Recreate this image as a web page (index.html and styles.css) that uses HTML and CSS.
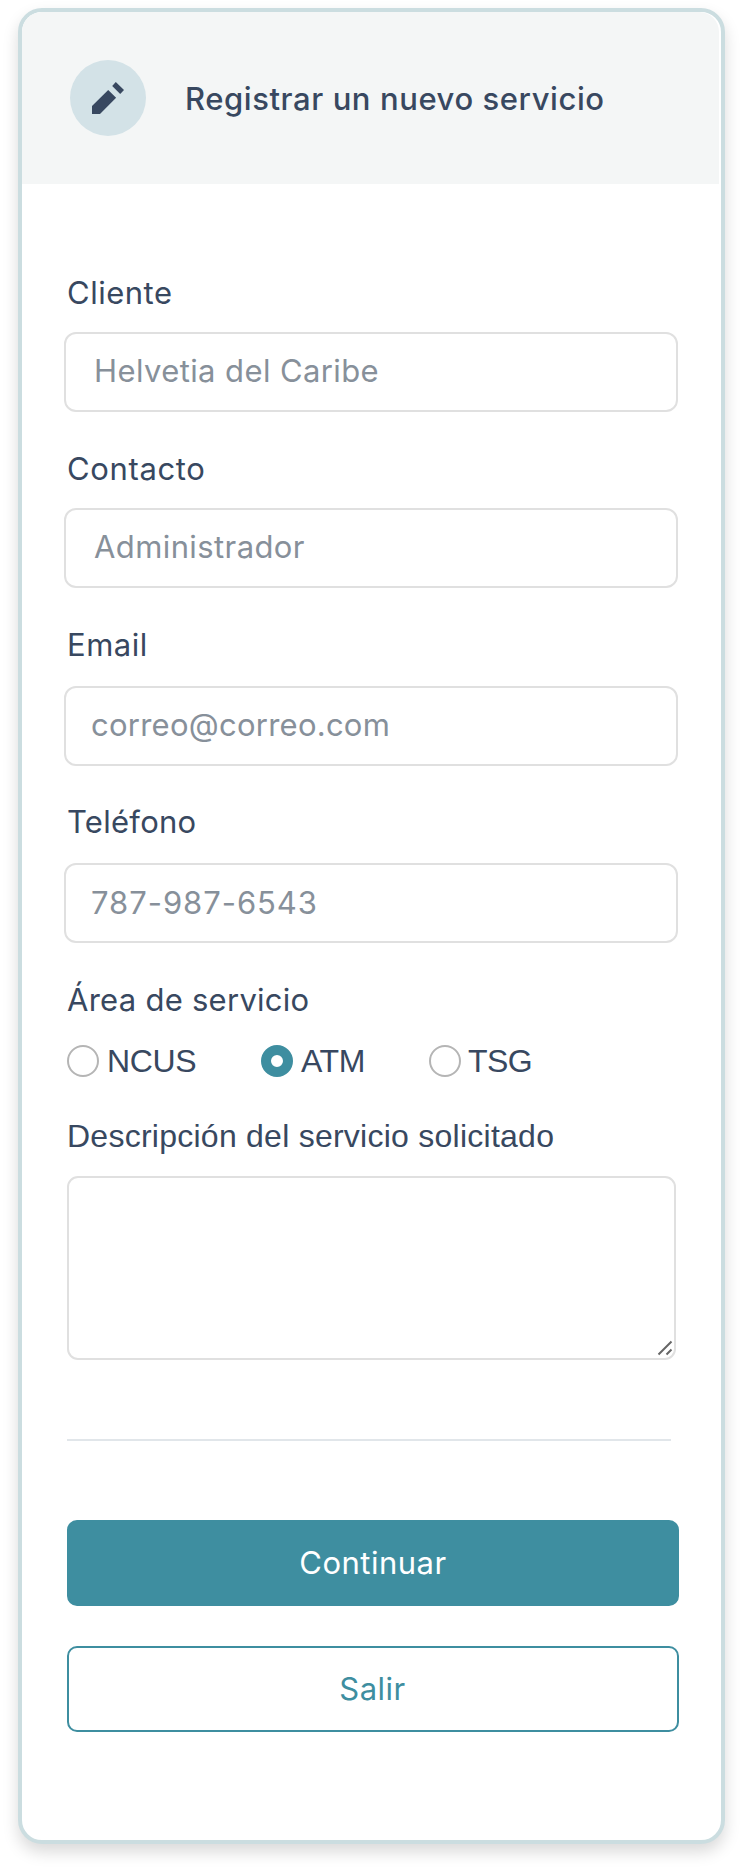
FILE: index.html
```html
<!DOCTYPE html>
<html lang="es">
<head>
<meta charset="utf-8">
<title>Registrar un nuevo servicio</title>
<link rel="stylesheet" href="styles.css">
</head>
<body>
<main class="card">
  <header class="card-header">
    <span class="badge">
      <svg width="32" height="32" viewBox="0 0 32 32" fill="currentColor"><path d="M0 32V24L16.2 7.9 24.1 15.8 8 32ZM20.2 3.9 23.8 0 32 8.1 28.2 11.9Z"/></svg>
    </span>
    <h1 class="title">Registrar un nuevo servicio</h1>
  </header>
  <form class="form">
    <div class="field">
      <label class="label" for="cliente">Cliente</label>
      <input class="input inset" id="cliente" placeholder="Helvetia del Caribe">
    </div>
    <div class="field">
      <label class="label contact" for="contacto">Contacto</label>
      <input class="input inset" id="contacto" placeholder="Administrador">
    </div>
    <div class="field spaced">
      <label class="label" for="email">Email</label>
      <input class="input email" id="email" placeholder="correo@correo.com">
    </div>
    <div class="field spaced">
      <label class="label snug" for="telefono">Teléfono</label>
      <input class="input phone" id="telefono" placeholder="787-987-6543">
    </div>
    <div class="label snug">Área de servicio</div>
    <div class="radios">
      <label class="option"><input class="radio" type="radio" name="area">NCUS</label>
      <label class="option atm"><input class="radio" type="radio" name="area" checked>ATM</label>
      <label class="option tsg"><input class="radio" type="radio" name="area">TSG</label>
    </div>
    <label class="description" for="descripcion">Descripción del servicio solicitado</label>
    <div class="textarea-wrap">
      <textarea class="textarea" id="descripcion"></textarea>
      <svg class="grip" width="16" height="16" viewBox="0 0 16 16"><path d="M1.5 14.5 14.5 1.5M9.5 14.5 14.5 9.5"/></svg>
    </div>
    <hr class="divider">
    <button class="button primary" type="button">Continuar</button>
    <button class="button outline" type="button">Salir</button>
  </form>
</main>
</body>
</html>
```

FILE: styles.css
```css
* { box-sizing: border-box; }
body {
  margin: 0;
  height: 1872px;
  padding: 8px 18px 0;
  background: #fff;
  color: #384860;
  font-family: Inter, "Liberation Sans", sans-serif;
}
.card {
  height: 1836px;
  border: 4px solid #cbdde0;
  border-radius: 24px;
  background: #fff;
  box-shadow: 0 8px 16px rgba(0, 0, 0, .15);
}
.card-header {
  display: flex;
  align-items: center;
  gap: 39px;
  height: 172px;
  margin-right: 2px;
  padding: 0 0 0 48px;
  border-radius: 20px 20px 0 0;
  background: #f4f6f6;
}
.badge {
  display: grid;
  place-items: center;
  width: 76px;
  height: 76px;
  border-radius: 50%;
  background: #d3e2e7;
}
.title {
  margin: 2px 0 0;
  font-size: 31px;
  line-height: 40px;
  font-weight: 500;
  letter-spacing: .58px;
}
.form {
  display: flex;
  flex-direction: column;
  padding: 89px 42px 0;
}
.field {
  display: flex;
  flex-direction: column;
  height: 176px;
}
.spaced { height: 177.3px; }
.label {
  height: 40px;
  padding-left: 3px;
  font-size: 31px;
  line-height: 40px;
  letter-spacing: .5px;
}
.contact { letter-spacing: .65px; }
.snug { letter-spacing: .27px; }
.input {
  flex: none;
  width: 614px;
  height: 80px;
  margin-top: 19px;
  padding: 0 0 2px 25px;
  border: 2px solid #e0e0e0;
  border-radius: 12px;
  background: #fff;
  font: 31px/40px Inter, sans-serif;
  letter-spacing: .4px;
  outline: 0;
}
.spaced .input { margin-top: 20.5px; }
.inset { padding: 0 0 4px 28px; }
.email { letter-spacing: .25px; }
.phone { padding-bottom: 0; letter-spacing: .95px; }
.input::placeholder { color: #87909a; opacity: 1; }
.radios {
  display: flex;
  gap: 63px;
  margin: 23.4px 0 0 3px;
}
.option {
  display: flex;
  align-items: center;
  gap: 8px;
  width: 131px;
  height: 36px;
  font: 32px/36px "Liberation Sans", Arial, sans-serif;
  letter-spacing: -.4px;
}
.atm { width: 105px; }
.tsg { gap: 7px; letter-spacing: -.6px; }
.radio {
  appearance: none;
  flex: none;
  width: 32px;
  height: 32px;
  margin: 0;
  border: 2px solid #b5b5b5;
  border-radius: 50%;
}
.radio:checked { border: 10px solid #3e8ea0; }
.description {
  margin: 37px 0 0 3px;
  font: 32px/40px "Liberation Sans", Arial, sans-serif;
  letter-spacing: .25px;
}
.textarea-wrap {
  position: relative;
  width: 609px;
  height: 184px;
  margin: 20px 0 0 3px;
}
.textarea {
  display: block;
  width: 100%;
  height: 100%;
  border: 2px solid #e0e0e0;
  border-radius: 11px;
  resize: none;
  outline: 0;
}
.grip {
  position: absolute;
  right: 3px;
  bottom: 4px;
  fill: none;
  stroke: #666;
  stroke-width: 2;
}
.divider {
  width: 604px;
  height: 2px;
  margin: 79px 0 0 3px;
  border: 0;
  background: #e1e6ea;
}
.button {
  width: 612px;
  height: 86px;
  margin: 79px 0 0 3px;
  padding: 0;
  border: 2px solid #3e8ea0;
  border-radius: 10px;
  font: 31px/40px Inter, sans-serif;
  letter-spacing: .5px;
}
.primary { background: #3e8ea0; color: #fff; }
.outline { margin-top: 40px; padding-right: 1px; background: #fff; color: #3e8ea0; }
```
